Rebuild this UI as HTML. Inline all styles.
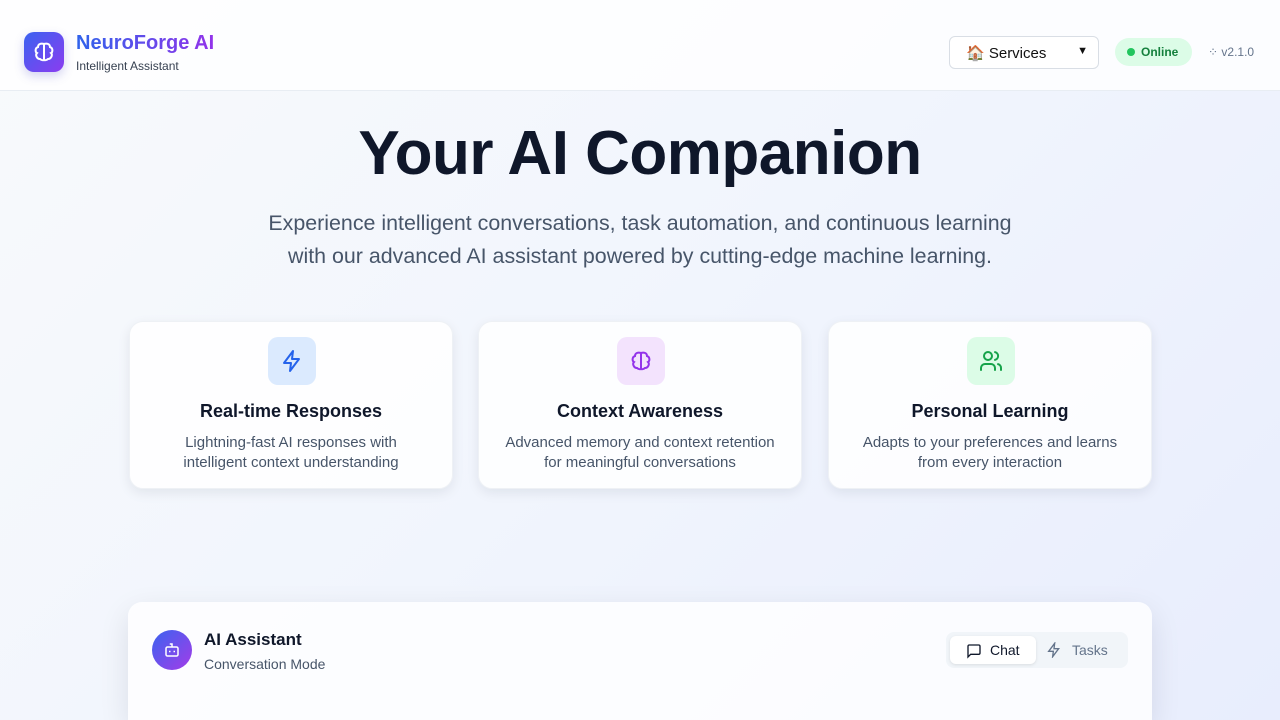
<!DOCTYPE html>
<html style="overflow:hidden;background:#eef2fc"><head><meta charset="utf-8"><style>
*{box-sizing:border-box;margin:0;padding:0}
body{width:1280px;height:720px;overflow:hidden;font-family:"Liberation Sans",sans-serif;background:linear-gradient(135deg,#f8fafc 0%,#f1f5fd 50%,#e8edfd 100%);position:relative;color:#0f172a}
.hdr{position:absolute;left:0;top:0;width:1280px;height:91px;background:rgba(255,255,255,.8);border-bottom:1px solid #e8edf3}
.logo{position:absolute;left:24px;top:32px;width:40px;height:40px;border-radius:10px;background:linear-gradient(135deg,#3b63f0,#8b3cf0);box-shadow:0 4px 10px rgba(80,80,200,.25);display:flex;align-items:center;justify-content:center}
.brand{position:absolute;left:76px;top:32px;font-size:20px;font-weight:bold;background:linear-gradient(90deg,#2f63eb,#9333ea);-webkit-background-clip:text;color:transparent}
.sub{position:absolute;left:76px;top:59px;font-size:12px;color:#374151}
.sel{position:absolute;left:949px;top:36px;width:150px;height:33px;border:1px solid #d9dee5;border-radius:6px;background:#fff;font-size:15px;padding:7px 0 0 16px;color:#111}
.sel .ch{position:absolute;right:10px;top:8px;font-size:11px}
.on{position:absolute;left:1115px;top:38px;width:77px;height:28px;border-radius:14px;background:#dcfce7;color:#15803d;font-size:12px;font-weight:bold;padding:7px 0 0 26px}
.on:before{content:"";position:absolute;left:12px;top:10px;width:8px;height:8px;border-radius:50%;background:#22c55e}
.ver{position:absolute;left:1208px;top:45px;font-size:12px;color:#64748b}
h1{position:absolute;left:0;width:1280px;top:118px;text-align:center;font-size:62px;font-weight:bold;color:#0f172a;letter-spacing:-0.5px}
.lead{position:absolute;left:0;width:1280px;top:207px;text-align:center;font-size:21.4px;line-height:33px;color:#475569}
.card{position:absolute;top:321px;width:324px;height:168px;background:rgba(255,255,255,.85);border:1px solid #eef1f5;border-radius:14px;box-shadow:0 4px 12px rgba(15,23,42,.08);text-align:center}
.ic{position:absolute;left:138px;top:15px;width:48px;height:48px;border-radius:10px;display:flex;align-items:center;justify-content:center}
.card h3{position:absolute;top:79px;width:100%;font-size:18px;font-weight:bold;color:#0f172a}
.card p{position:absolute;top:111px;width:100%;font-size:15px;line-height:20px;color:#475569}
.chat{position:absolute;left:128px;top:602px;width:1024px;height:118px;background:rgba(255,255,255,.8);border-radius:14px 14px 0 0;box-shadow:0 10px 30px rgba(15,23,42,.1)}
.bot{position:absolute;left:24px;top:28px;width:40px;height:40px;border-radius:50%;background:linear-gradient(135deg,#3b63f0,#a33ce8);display:flex;align-items:center;justify-content:center}
.t1{position:absolute;left:76px;top:28px;font-size:17px;font-weight:bold}
.t2{position:absolute;left:76px;top:54px;font-size:14px;color:#475569}
.tabs{position:absolute;left:818px;top:30px;width:182px;height:36px;background:#f1f5f9;border-radius:8px}
.tab1{position:absolute;left:4px;top:4px;width:86px;height:28px;background:#fff;border-radius:6px;box-shadow:0 1px 3px rgba(0,0,0,.1);font-size:14px;padding:6px 0 0 40px;font-weight:500}
.tab2{position:absolute;left:100px;top:10px;font-size:14px;color:#64748b;padding-left:26px}
</style></head><body>
<div class="hdr">
<div class="logo"><svg width="24" height="24" viewBox="0 0 24 24" fill="none" stroke="#fff" stroke-width="2"><path d="M12 4v16M12 4C9 3 6 4 6 7 3 8 3 12 5 13 3 15 5 19 8 19c1 1 3 1.5 4 1M12 4c3-1 6 0 6 3 3 1 3 5 1 6 2 2 0 6-3 6-1 1-3 1.5-4 1"/></svg></div>
<div class="brand">NeuroForge AI</div>
<div class="sub">Intelligent Assistant</div>
<div class="sel">🏠 Services<span class="ch">▼</span></div>
<div class="on">Online</div>
<div class="ver">⁘ v2.1.0</div>
</div>
<h1>Your AI Companion</h1>
<div class="lead">Experience intelligent conversations, task automation, and continuous learning<br>with our advanced AI assistant powered by cutting-edge machine learning.</div>
<div class="card" style="left:129px"><div class="ic" style="background:#dbeafe"><svg width="24" height="24" viewBox="0 0 24 24" fill="none" stroke="#2563eb" stroke-width="2" stroke-linejoin="round"><path d="M13 2 4 14h7l-1 8 9-12h-7z"/></svg></div><h3>Real-time Responses</h3><p>Lightning-fast AI responses with<br>intelligent context understanding</p></div>
<div class="card" style="left:478px"><div class="ic" style="background:#f3e3fd"><svg width="24" height="24" viewBox="0 0 24 24" fill="none" stroke="#9333ea" stroke-width="2"><path d="M12 4v16M12 4C9 3 6 4 6 7 3 8 3 12 5 13 3 15 5 19 8 19c1 1 3 1.5 4 1M12 4c3-1 6 0 6 3 3 1 3 5 1 6 2 2 0 6-3 6-1 1-3 1.5-4 1"/></svg></div><h3>Context Awareness</h3><p>Advanced memory and context retention<br>for meaningful conversations</p></div>
<div class="card" style="left:828px"><div class="ic" style="background:#dcfce7"><svg width="24" height="24" viewBox="0 0 24 24" fill="none" stroke="#16a34a" stroke-width="2" stroke-linecap="round"><circle cx="9" cy="7" r="4"/><path d="M2 21v-2a4 4 0 0 1 4-4h6a4 4 0 0 1 4 4v2M16 3.1a4 4 0 0 1 0 7.8M22 21v-2a4 4 0 0 0-3-3.9"/></svg></div><h3>Personal Learning</h3><p>Adapts to your preferences and learns<br>from every interaction</p></div>
<div class="chat">
<div class="bot"><svg width="18" height="18" viewBox="0 0 24 24" fill="none" stroke="#fff" stroke-width="2"><rect x="4" y="8" width="16" height="12" rx="2"/><path d="M12 8V4h-3M9 13v2M15 13v2"/></svg></div>
<div class="t1">AI Assistant</div><div class="t2">Conversation Mode</div>
<div class="tabs"><div class="tab1"><svg style="position:absolute;left:16px;top:7px" width="16" height="16" viewBox="0 0 24 24" fill="none" stroke="#0f172a" stroke-width="2"><path d="M21 15a2 2 0 0 1-2 2H7l-4 4V5a2 2 0 0 1 2-2h14a2 2 0 0 1 2 2z"/></svg>Chat</div>
<div class="tab2"><svg style="position:absolute;left:0;top:0" width="16" height="16" viewBox="0 0 24 24" fill="none" stroke="#64748b" stroke-width="2"><path d="M13 2 4 14h7l-1 8 9-12h-7z"/></svg>Tasks</div></div>
</div>
</body></html>
